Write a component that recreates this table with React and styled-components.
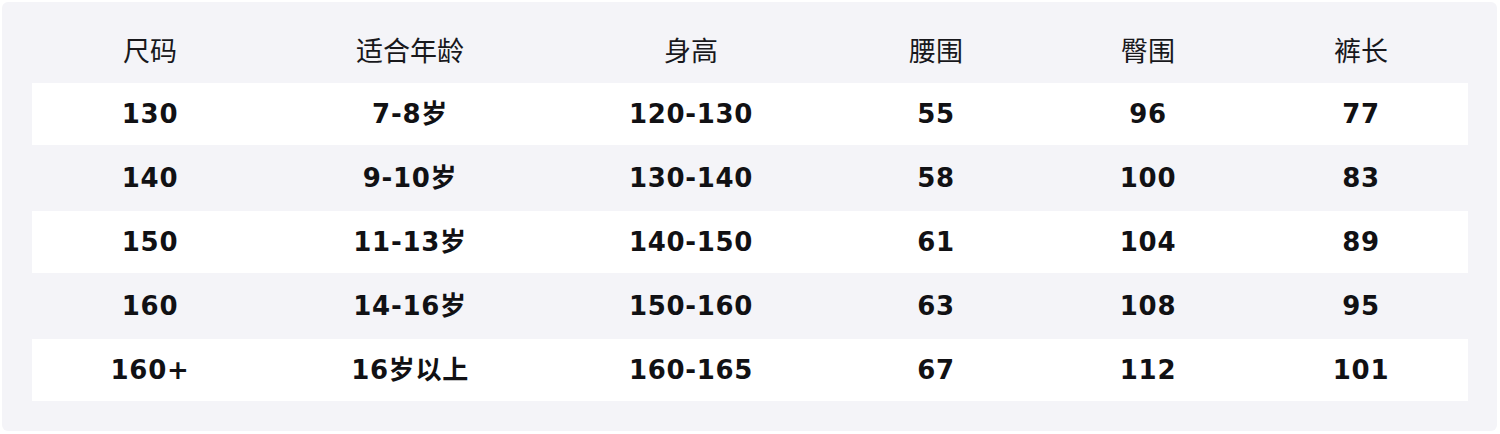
import React from "react";
import styled, { createGlobalStyle } from "styled-components";

const GlobalStyle = createGlobalStyle`
    html, body {
        margin: 0;
        padding: 0;
        background: #ffffff;
    }
`;

const columns = ["尺码", "适合年龄", "身高", "腰围", "臀围", "裤长"];

const rows = [
    ["130", "7-8岁", "120-130", "55", "96", "77"],
    ["140", "9-10岁", "130-140", "58", "100", "83"],
    ["150", "11-13岁", "140-150", "61", "104", "89"],
    ["160", "14-16岁", "150-160", "63", "108", "95"],
    ["160+", "16岁以上", "160-165", "67", "112", "101"]
];

const Panel = styled.div`
    margin: 2px 3px 3px 2px;
    padding: 17px 29px 30px 30px;
    background-color: #f4f4f8;
    border-radius: 6px;
    font-family: "DejaVu Sans", "Noto Sans CJK SC", sans-serif;
    line-height: 1;
`;

const Row = styled.div`
    display: grid;
    grid-template-columns: 236px 284px 278px 212px 212px 214px;
    align-items: center;
    height: ${props => props.height}px;
    background-color: ${props => (props.striped ? "#ffffff" : "transparent")};
`;

const HeadCell = styled.div`
    text-align: center;
    font-size: 27px;
    font-weight: 400;
    color: #18181c;
`;

const Cell = styled.div`
    text-align: center;
    font-size: 26px;
    font-weight: 700;
    letter-spacing: 0.7px;
    color: #111114;
`;

function App() {
    return (
        <>
            <GlobalStyle />
            <Panel>
                <Row height={64}>
                    {columns.map(name => (
                        <HeadCell key={name}>{name}</HeadCell>
                    ))}
                </Row>
                {rows.map((row, i) => (
                    <Row key={row[0]} striped={i % 2 === 0} height={i % 2 === 0 ? 62 : 66}>
                        {row.map((value, j) => (
                            <Cell key={j}>{value}</Cell>
                        ))}
                    </Row>
                ))}
            </Panel>
        </>
    );
};

export default App;
